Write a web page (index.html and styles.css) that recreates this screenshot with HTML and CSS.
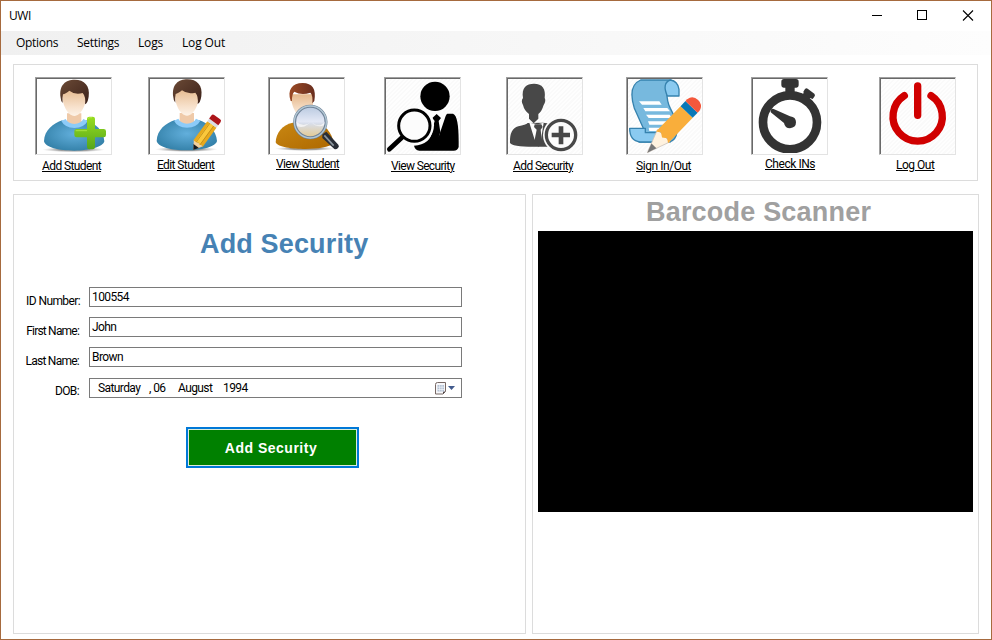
FILE: index.html
```html
<!DOCTYPE html>
<html lang="en">
<head>
<meta charset="utf-8">
<title>UWI</title>
<link rel="stylesheet" href="styles.css">
</head>
<body>
<div class="window">
  <header class="titlebar">
    <span class="caption">UWI</span>
    <svg class="controls" width="102" height="12" viewBox="0 0 102 12" fill="none" stroke="#000">
      <path d="M0 5.500H10M45.500 .5h9v9h-9z" shape-rendering="crispEdges"/>
      <path d="M91 .5l10 10M101 .5l-10 10" stroke-width="1.100"/>
    </svg>
  </header>
  <nav class="menu">
    <span class="m1">Options</span><span class="m2">Settings</span><span class="m3">Logs</span><span class="m4">Log Out</span>
  </nav>

  <section class="toolbar">
    <div class="tool t1">
      <div class="pic"><svg viewBox="21 27 219 222">
        <defs>
          <linearGradient id="face" x1="0" y1="0" x2="0" y2="1"><stop offset="0" stop-color="#e5b88b"/><stop offset=".65" stop-color="#f7e0ca"/><stop offset="1" stop-color="#fdf3e8"/></linearGradient>
          <linearGradient id="hair" x1="0" y1="0" x2="1" y2="1"><stop offset="0" stop-color="#6b4a36"/><stop offset="1" stop-color="#3c2119"/></linearGradient>
          <radialGradient id="shirt" cx=".5" cy=".45" r=".55"><stop offset="0" stop-color="#62afdc"/><stop offset="1" stop-color="#3683ab"/></radialGradient>
          <linearGradient id="plus" x1="0" y1="0" x2="0" y2="1"><stop offset="0" stop-color="#98dd20"/><stop offset="1" stop-color="#55a51b"/></linearGradient>
          <radialGradient id="shade"><stop offset=".5" stop-color="#888" stop-opacity=".8"/><stop offset="1" stop-color="#bbb" stop-opacity="0"/></radialGradient>
        </defs>
        <g id="person">
          <ellipse cx="131" cy="239" rx="94" ry="8" fill="url(#shade)"/>
          <path d="M111 130h43v23q16 16-22 18q-38-2-21-18z" fill="#efcaa9"/>
          <path d="M42 214C43 180 70 160 97 151Q104 170 133 170Q160 168 168 151C196 160 221 182 223 214C220 230 180 242 133 242S45 232 42 214z" fill="url(#shirt)"/>
          <path d="M94 153l13-6q7 14 26 15q20-1 27-15l13 6q-10 20-40 21q-29-1-39-21z" fill="#8ccbf8"/>
          <path d="M97 73Q99 55 132 55T169 76C169 103 154 137 133 138C112 137 96 103 97 73z" fill="url(#face)"/>
          <path d="M92 83C86 44 108 29 134 29C163 29 181 47 176 80Q173 100 165 103Q168 80 158 69Q134 75 118 62Q106 72 99 73Q96 85 98 99Q92 92 92 83z" fill="url(#hair)"/>
        </g>
        <path d="M171 146q0-6 7-6h10q7 0 7 6v31h26q7 0 7 7v11q0 7-7 7h-26v29q0 7-7 7h-10q-7 0-7-7v-29h-31q-7 0-7-7v-11q0-7 7-7h31z" fill="url(#plus)"/>
        <path d="M175 146q0-3 4-3h7M137 182h34" fill="none" stroke="#bdf253" stroke-width="2"/>
      </svg></div>
      <a>Add Student</a>
    </div>
    <div class="tool t2">
      <div class="pic"><svg viewBox="24 27 219 222">
        <use href="#person" x="2" y="-1"/>
        <g transform="translate(154 240) rotate(-54) scale(1.040 1)">
          <path d="M0 0L25-17V17z" fill="#f2d09c"/>
          <path d="M0 0L14-10V10z" fill="#16191c"/>
          <path d="M23-17H91V17H23q5-5 0-11q5-6 0-11z" fill="#e8a91c"/>
          <path d="M24-9H91V6H24q5-8 0-15z" fill="#fac83c"/>
          <path d="M24-7H91M24 7H91" stroke="#b78315" stroke-width="2"/>
          <path d="M91-17h9v34h-9z" fill="#d9dce2"/>
          <path d="M100-17h11q6 0 6 6v22q0 6-6 6h-11z" fill="#ad151a"/>
        </g>
      </svg></div>
      <a>Edit Student</a>
    </div>
    <div class="tool t3">
      <div class="pic"><svg viewBox="24 27 219 222">
        <defs>
          <linearGradient id="gold" x1="0" y1="0" x2="1" y2="1"><stop offset="0" stop-color="#c98712"/><stop offset="1" stop-color="#ad6800"/></linearGradient>
          <linearGradient id="lens" x1="0" y1="0" x2="0" y2="1"><stop offset="0" stop-color="#b9c9e0"/><stop offset=".48" stop-color="#e3e8f5"/><stop offset=".55" stop-color="#d8deea"/><stop offset="1" stop-color="#e5c98d"/></linearGradient>
          <linearGradient id="redhair"><stop offset="0" stop-color="#9b4a25"/><stop offset="1" stop-color="#682d1e"/></linearGradient>
        </defs>
        <ellipse cx="130" cy="236" rx="91" ry="7" fill="url(#shade)"/>
        <path d="M41 217C42 190 60 164 92 158L155 158C190 160 211 190 215 220C202 232 168 237 130 237S47 232 41 217z" fill="url(#gold)"/>
        <path d="M88 73H153V105Q143 142 121 145Q96 132 88 93z" fill="url(#face)"/>
        <path d="M86 93C75 60 90 39 122 39C151 39 164 57 157 93L151 100Q153 75 145 68Q118 78 97 65Q89 73 90 93z" fill="url(#redhair)"/>
        <path d="M181 193l12-8 36 39q4 5-1 10t-11 3l-36-33z" fill="#292e37"/>
        <path d="M187 196l28 31" stroke="#8c969e" stroke-width="5"/>
        <circle cx="145" cy="156" r="47" fill="url(#lens)" stroke="#71849a" stroke-width="9"/>
        <path d="M103 155q22 20 44 0l-11 9q-15 12-31 4zM147 155q24 22 42 0l-3 11q-21 9-39-11z" fill="#fff" opacity=".65"/>
        <circle cx="145" cy="156" r="48" fill="none" stroke="#b3c8d4" stroke-width="4"/>
      </svg></div>
      <a>View Student</a>
    </div>
    <div class="tool t4">
      <div class="pic hatch"><svg viewBox="24 27 219 222">
        <circle cx="171" cy="79" r="44"/>
        <path d="M170 131h55C237 135 242 165 242 213V231Q239 242 227 242H124Q111 240 108 227Q158 225 163 181Q164 154 156 145z"/>
        <path d="M154 126h56l-7 12-21 62-24-50z" fill="#fcfcfc"/>
        <path d="M176 132l13 12-7 9 5 33-9 28-18-26 10-35-7-9z"/>
        <circle cx="110" cy="166" r="58" fill="#fcfcfc"/>
        <path d="M76 199L35 238" stroke="#fcfcfc" stroke-width="23"/>
        <path d="M76 199L34 238" stroke="#000" stroke-width="14" stroke-linecap="round"/>
        <circle cx="109" cy="167" r="47" fill="#fcfcfc" stroke="#000" stroke-width="9"/>
      </svg></div>
      <a>View Security</a>
    </div>
    <div class="tool t5">
      <div class="pic hatch"><svg viewBox="24 27 219 222" fill="#484848">
        <path d="M69 84C64 53 79 41 102 41C127 41 138 56 134 84Q139 92 131 105Q125 125 115 132V146L101 160 87 146V132Q73 122 69 105Q62 93 69 84z"/>
        <path d="M83 159Q77 165 55 169Q28 177 30 218Q35 230 101 230H181V166L130 158z"/>
        <path d="M88 158L104 209H123L131 158L114 163z" fill="#fcfcfc"/>
        <path d="M104 163h20l4 8-6 8 4 38-10 13-14-11 8-40-8-8z"/>
        <circle cx="183" cy="195" r="54" fill="#fcfcfc"/>
        <circle cx="183" cy="195" r="44" fill="none" stroke="#484848" stroke-width="10"/>
        <path d="M176 169h14v19h20v14h-20v21h-14v-21h-21v-14h21z"/>
      </svg></div>
      <a>Add Security</a>
    </div>
    <div class="tool t6">
      <div class="pic hatch"><svg viewBox="24 27 219 222" stroke-linejoin="round">
        <path d="M62 30H151Q172 33 175 61H141Q139 91 151 115Q174 157 171 185Q168 211 148 216H57Q75 203 70 175L43 115Q22 47 62 30z" fill="#77b9de" stroke="#3682ae" stroke-width="4"/>
        <path d="M151 30Q125 39 142 78H177V58Q174 34 151 30z" fill="#8acaf0" stroke="#3682ae" stroke-width="4"/>
        <path d="M29 175H76V188H127Q124 211 150 216H60Q29 213 29 175z" fill="#8acaf0" stroke="#3682ae" stroke-width="4"/>
        <path d="M57 94h61l7 10H66zM70 114h72l8 10H76zM78 134h71l7 10H86zM84 154h73l3 10H88zM86 173h42v10H88z" fill="#fff"/>
        <g transform="translate(82 248) rotate(-46) scale(1.060 1.150)">
          <path d="M0 0L67-23V23z" fill="#fff2df" stroke="#c9c1b9" stroke-width="2"/>
          <path d="M0 0L27-9V9z" fill="#777"/>
          <path d="M60-22H160V22H60l8-11-8-11 8-11z" fill="#f9ae3b"/>
          <path d="M160-22h20v44h-20z" fill="#0878b7"/>
          <path d="M180-22h7q20 3 20 22t-20 22h-7z" fill="#f4583c"/>
        </g>
      </svg></div>
      <a>Sign In/Out</a>
    </div>
    <div class="tool t7">
      <div class="pic"><svg viewBox="24 27 219 222" fill="#333">
        <path d="M117 27h36q8 0 8 8v11q0 7-7 7h-5v16h-28V53h-5q-7 0-7-7V35q0-8 8-8z"/>
        <path d="M188 56l20 15q4 4 0 9l-5 7-8-3-13 18-20-15 14-18-1-4 5-8q4-4 8-1z"/>
        <circle cx="135" cy="157" r="81" fill="#fff" stroke="#333" stroke-width="26"/>
        <path d="M77 122q1-8 9-5l49 22q18 2 18 18t-18 18q-15 0-18-16L79 128q-3-2-2-6z"/>
      </svg></div>
      <a>Check INs</a>
    </div>
    <div class="tool t8">
      <div class="pic hatch"><svg viewBox="93 237 219 222" fill="none" stroke="#d00000" stroke-width="22" stroke-linecap="round">
        <path d="M203 258V346M163 287A74 74 0 1 0 243 287"/>
      </svg></div>
      <a>Log Out</a>
    </div>
  </section>

  <main class="content">
    <section class="panel form">
      <h1>Add Security</h1>
      <div class="row r1"><label>ID Number:</label><div class="field">100554</div></div>
      <div class="row r2"><label>First Name:</label><div class="field">John</div></div>
      <div class="row r3"><label>Last Name:</label><div class="field">Brown</div></div>
      <div class="row r4"><label>DOB:</label><div class="field date">
        <span class="day">Saturday</span><span class="num">, 06</span><span class="month">August</span><span>1994</span>
        <svg class="cal" width="21" height="14" viewBox="0 0 21 14">
          <path d="M.5 2.500q0-2 2-2h8v9l-2.500 2.500H.5z" fill="#f7f7fa" stroke="#776864"/>
          <path d="M8 12V9.500h2.500z" fill="#52484a"/>
          <path d="M2.500 3h6.500v6.500H2.500z" fill="#b3c1d3"/>
          <path d="M2.500 5.200H9M2.500 7.500H9M4.700 3v6.500M7 3v6.500" stroke="#f4f7fb" stroke-width=".7"/>
          <path d="M13 4h7l-3.500 4z" fill="#425b8d"/>
        </svg>
      </div></div>
      <button>Add Security</button>
    </section>
    <section class="panel scanner">
      <h2>Barcode Scanner</h2>
      <div class="screen"></div>
    </section>
  </main>
</div>
</body>
</html>
```
FILE: styles.css
```css
* { box-sizing: border-box; }
body { margin: 0; font: 12px/14px Roboto, "Liberation Sans", sans-serif; color: #000; }
.window { width: 992px; height: 640px; border: 1px solid #a66a3e; background: #fff; display: flex; flex-direction: column; }
.titlebar { height: 30px; display: flex; justify-content: space-between; padding: 7px 17px 0 8px; font: 12px/16px "Open Sans", sans-serif; }
.caption { letter-spacing: -.4px; }
.controls { margin-top: 2px; }
.menu { height: 24px; background: linear-gradient(90deg, #f0f0f0, #fdfdfd); display: flex; padding: 3px 0 0 15px; font: 12px/18px "Open Sans", sans-serif; letter-spacing: -.15px; }
.m1 { width: 61px; letter-spacing: -.3px; }
.m2 { width: 61px; letter-spacing: -.3px; }
.m3 { width: 44px; }
.toolbar { width: 965px; height: 117px; margin: 9px 0 0 12px; border: 1px solid #dcdcdc; display: flex; padding: 12px 0 0 21px; }
.tool { width: 77px; flex: none; display: flex; flex-direction: column; align-items: flex-start; }
.tool a { margin: 4px 0 0 7px; white-space: nowrap; letter-spacing: -.6px; text-decoration: underline; text-decoration-thickness: 1px; text-underline-offset: 1px; }
.t1 { margin-right: 36px; }
.t2 { margin-right: 43px; }
.t3 { margin-right: 39px; }
.t4 { margin-right: 45px; }
.t5 { margin-right: 43px; }
.t6 { margin-right: 48px; }
.t7 { margin-right: 51px; }
.tool.t2 a { margin: 3px 0 0 9px; }
.tool.t3 a { margin: 2px 0 0 8px; }
.tool.t4 a { letter-spacing: -.65px; }
.tool.t6 a { margin-left: 10px; letter-spacing: -.45px; }
.tool.t7 a { margin: 2px 0 0 14px; letter-spacing: -.45px; }
.tool.t8 a { margin: 3px 0 0 17px; letter-spacing: -.5px; }
.tool.t3 a { letter-spacing: -.6px; }
.pic { width: 77px; height: 78px; border: 1px solid; border-color: #a0a0a0 #e3e3e3 #e3e3e3 #a0a0a0; box-shadow: inset 1px 1px #696969; padding: 1px; background: #fff; }
.pic svg { display: block; width: 73px; height: 74px; }
.hatch { background: repeating-linear-gradient(135deg, #fefefe 0 1.500px, #fafafa 1.500px 3px); }
.content { display: flex; gap: 6px; margin: 13px 0 0 12px; height: 440px; }
.panel { border: 1px solid #dcdcdc; }
.form { width: 513px; display: flex; flex-direction: column; padding-top: 33px; }
h1, h2 { margin: 0; font: bold 27px/32px "Liberation Sans", sans-serif; letter-spacing: .15px; white-space: nowrap; }
h1 { color: #4682b4; margin: 0 0 27px 186px; }
.row { display: flex; height: 20px; margin-bottom: 10px; letter-spacing: -.6px; }
.row label { width: 66px; text-align: right; padding-top: 7px; margin-right: 9px; white-space: nowrap; }
.r2 label, .r3 label, .r4 label { width: 65px; margin-right: 10px; }
.r2 label { letter-spacing: -.8px; }
.r3 label { letter-spacing: -.75px; }
.r4 label { padding-top: 6px; }
.r3 { margin-bottom: 11px; }
.field { width: 373px; height: 20px; border: 1px solid #7a7a7a; padding: 2px; }
.date { display: flex; padding-left: 8px; }
.day { width: 51px; }
.num { width: 29px; }
.month { width: 45px; }
.cal { margin: 1px 3px 0 auto; }
button { width: 173px; height: 41px; margin: 19px 0 0 172px; padding: 0 3px 0 0; border: 2px solid #0078d7; box-shadow: inset 0 0 0 1px #dcecdc; background: #008000; color: #fff; font: bold 14px/16px "Liberation Sans", sans-serif; letter-spacing: .5px; }
.scanner { width: 447px; padding-top: 1px; }
.scanner h2 { color: #a0a0a0; margin-left: 113px; letter-spacing: .2px; }
.screen { width: 435px; height: 281px; margin: 3px 0 0 5px; background: #000; }
```
